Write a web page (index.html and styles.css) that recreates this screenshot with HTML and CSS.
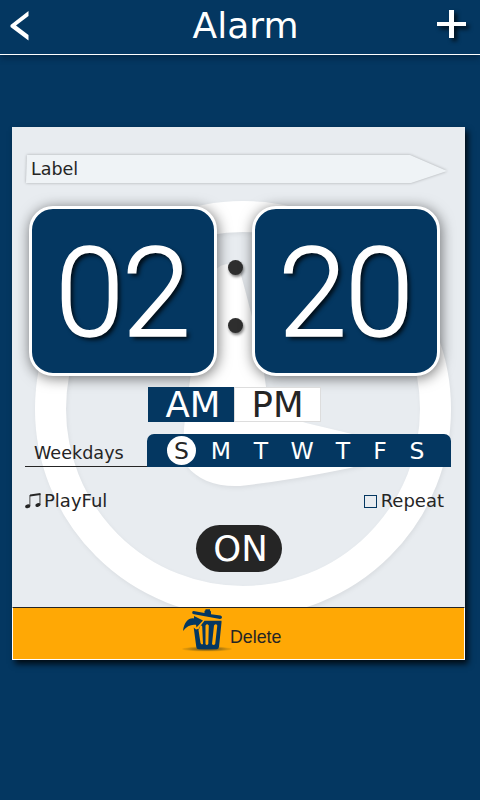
FILE: index.html
```html
<!DOCTYPE html>
<html lang="en">
<head>
<meta charset="utf-8">
<title>Alarm</title>
<link rel="stylesheet" href="styles.css">
</head>
<body>
<header class="topbar">
  <svg class="back" width="20" height="31" viewBox="0 0 20 31"><path d="M18.500 0V5L6 14.500 18.500 24V29.500L0.500 16V14Z" fill="#fff"/></svg>
  <h1 class="title">Alarm</h1>
  <svg class="add" width="29" height="29" viewBox="0 0 29 29"><path d="M12 0h5v12h12v4H17v12h-5V16H0v-4h12Z" fill="#fff"/></svg>
</header>
<main class="card">
  <svg class="watermark" width="453" height="480" viewBox="12 127 453 480">
    <circle cx="243" cy="409" r="192.500" fill="none" stroke="#fff" stroke-width="31"/>
    <path d="M216 270C221 262 237 261 241 275C251 312 262 352 266 387L268 411L306 423L352 434C390 445 385 460 350 468C312 476 275 482 240 486C215 487 197 479 187 466C180 446 185 418 190 380C196 340 208 300 216 270Z" fill="#fff"/>
  </svg>
  <div class="label">
    <svg class="label-shape" width="422" height="28" viewBox="0 0 422 28"><path d="M1 0H384L421 16L385 28H0Z" fill="#eff3f6"/></svg>
    <span class="label-text">Label</span>
  </div>
  <div class="time">
    <div class="tile">02</div>
    <div class="colon"><i class="dot"></i><i class="dot"></i></div>
    <div class="tile">20</div>
  </div>
  <div class="ampm">
    <span class="half half-on">AM</span>
    <span class="half">PM</span>
  </div>
  <div class="weekdays">
    <span class="weekdays-name">Weekdays</span>
    <div class="days">
      <span class="day day-on">S</span><span class="day">M</span><span class="day">T</span><span class="day">W</span><span class="day">T</span><span class="day">F</span><span class="day">S</span>
    </div>
  </div>
  <div class="options">
    <span class="option">
      <svg width="17" height="16" viewBox="0 0 17 16"><g fill="#252525"><path d="M5 1.500L15.500 0V2L5 3.500Z"/><path d="M4.500 2h.8v11h-.8zM14.500 1h.9v11h-.9z"/><ellipse cx="2.700" cy="13.300" rx="2.600" ry="1.800" transform="rotate(-15 2.700 13.300)"/><ellipse cx="12.900" cy="12" rx="2.600" ry="1.800" transform="rotate(-15 12.900 12)"/></g></svg>
      <span class="sound-name">PlayFul</span>
    </span>
    <span class="option"><i class="checkbox"></i>Repeat</span>
  </div>
  <div class="switch">ON</div>
  <footer class="delete">
    <svg class="trash" width="51" height="46" viewBox="181 608 51 46">
      <defs><radialGradient id="ground"><stop offset="0" stop-color="#6b4d12"/><stop offset=".6" stop-color="#a87812" stop-opacity=".9"/><stop offset="1" stop-color="#c88a0a" stop-opacity=".3"/></radialGradient></defs>
      <ellipse cx="207" cy="649" rx="25" ry="2.600" fill="url(#ground)"/>
      <g fill="#043761">
        <path d="M193.500 611Q192 611 192.200 613Q192.200 614 194 614.300L220 619Q222 619 222 617.300Q222 616 220.500 615.500L211 614.200V611.500L210 610.500V609.300H205.500V610.300L204.500 611V613Z"/>
        <path d="M183 631C184 622 189 617.500 194 618.500V616L203 620.500L196.500 627.500L196 624.800C191 624 187 626 183 631Z"/>
        <path fill-rule="evenodd" d="M204.500 620.800H221.500V622.500L219 647Q218.500 649.300 216.500 649.300H199Q196.500 649.300 196.300 647L193.700 627.500L196 629.500L199.500 628.500L200 626.500ZM198.500 630L200.500 643Q201.500 645.300 203 644L202.200 626.500Q201.500 624.500 199.500 627ZM205.500 625.500V644Q206.800 646 208.300 644L208.800 625.500Q207 623 205.500 625.500ZM214 625.500L212 644Q213.500 646 215.200 644L217.300 625.500Q216 623 214 625.500Z"/>
      </g>
    </svg>
    <span class="delete-text">Delete</span>
  </footer>
</main>
</body>
</html>
```
FILE: styles.css
```css
* { box-sizing: border-box; }
body {
  margin: 0;
  height: 800px;
  overflow: hidden;
  background: #043761;
  color: #252525;
  font-family: "DejaVu Sans", Verdana, sans-serif;
  font-size: 18px;
}
svg { display: block; flex: none; }
.topbar {
  display: flex;
  justify-content: space-between;
  align-items: flex-start;
  height: 55px;
  padding: 0 14px 0 10px;
  border-bottom: 1px solid #fff;
  box-shadow: 0 3px 6px rgba(0, 20, 40, .45);
}
.back { margin-top: 11px; }
.title {
  margin: 0 0 0 24px;
  color: #fff;
  font-size: 36px;
  font-weight: 400;
  line-height: 52px;
}
.add {
  margin-top: 10px;
  overflow: visible;
  filter: drop-shadow(3px 3px 2px rgba(0, 0, 0, .75));
}
.card {
  position: relative;
  display: flex;
  flex-direction: column;
  width: 453px;
  height: 533px;
  margin: 72px 0 0 12px;
  padding-top: 28px;
  background: #e8ecf0;
  box-shadow: 3px 4px 6px rgba(0, 0, 0, .8);
}
.watermark { position: absolute; top: 0; left: 0; filter: drop-shadow(1px 2px 2px rgba(0, 0, 0, .06)); }
.label, .time, .ampm, .weekdays, .options, .switch, .delete { position: relative; flex: none; }
.label { height: 28px; margin-left: 14px; }
.label-shape {
  position: absolute;
  top: 0;
  left: 0;
  overflow: visible;
  filter: drop-shadow(0 0 1.500px rgba(0, 0, 0, .28));
}
.label-text { position: relative; display: block; padding-left: 5px; font-size: 17.500px; line-height: 28px; }
.time { display: flex; margin: 23px 0 0 17px; }
.tile {
  width: 188px;
  height: 170px;
  border: 3px solid #fff;
  border-radius: 24px;
  background: #043761;
  box-shadow: 1px 2px 14px rgba(0, 0, 0, .55);
  color: #fff;
  font-family: Roboto, sans-serif;
  font-size: 124px;
  font-weight: 300;
  line-height: 169px;
  letter-spacing: -2px;
  text-align: center;
  text-indent: -2px;
  -webkit-text-stroke: 1.500px #fff;
  text-shadow: 3px 3px 4px rgba(0, 0, 0, .8);
}
.colon {
  display: flex;
  flex-direction: column;
  align-items: center;
  gap: 43px;
  width: 35px;
  padding: 54px 0 0 1px;
}
.dot {
  width: 15px;
  height: 15px;
  border-radius: 50%;
  background: #2e2e2e;
  box-shadow: 1px 2px 3px rgba(0, 0, 0, .5);
}
.ampm {
  display: flex;
  width: 173px;
  height: 35px;
  margin: 11px 0 0 136px;
  font-size: 35.500px;
  line-height: 34px;
  text-align: center;
}
.half { flex: 1; border: 1px solid #ddd; background: #fff; }
.half-on { flex: 0 0 86px; padding-left: 4px; border-color: #043761; background: #043761; color: #fff; }
.weekdays { display: flex; height: 33px; margin: 12px 0 0 13px; }
.weekdays-name { width: 122px; padding-left: 9px; border-bottom: 1px solid #252525; font-size: 17.600px; line-height: 38px; }
.days {
  display: grid;
  grid-template-columns: 40px 40px 40px 42px 40px 34px 40px;
  width: 304px;
  height: 33px;
  padding-left: 14px;
  border-radius: 7px 7px 0 0;
  background: #043761;
  color: #fff;
  font-size: 23.500px;
  line-height: 34px;
  text-align: center;
}
.day-on {
  width: 29px;
  height: 29px;
  margin: 2px 0 0 6px;
  border-radius: 50%;
  background: #fff;
  color: #252525;
  line-height: 30px;
}
.options {
  display: flex;
  justify-content: space-between;
  margin: 23px 21px 0 13px;
  line-height: 22px;
}
.option { display: flex; align-items: center; }
.sound-name { margin-left: 2px; }
.checkbox { width: 13px; height: 13px; margin-right: 4px; border: 1px solid #043761; }
.switch {
  width: 86px;
  height: 47px;
  margin: 13px 0 0 184px;
  padding-left: 3px;
  border-radius: 24px;
  background: #252525;
  color: #fff;
  font-size: 35.500px;
  line-height: 47px;
  text-align: center;
}
.delete {
  display: flex;
  height: 53px;
  margin-top: auto;
  padding-left: 168px;
  border: 1px solid #fff;
  border-top-color: #252525;
  background: #ffa805;
}
.delete-text {
  margin-left: -2px;
  padding-top: 17px;
  font-family: "Liberation Sans", Arial, sans-serif;
  font-size: 17.800px;
  line-height: 24px;
}
```
